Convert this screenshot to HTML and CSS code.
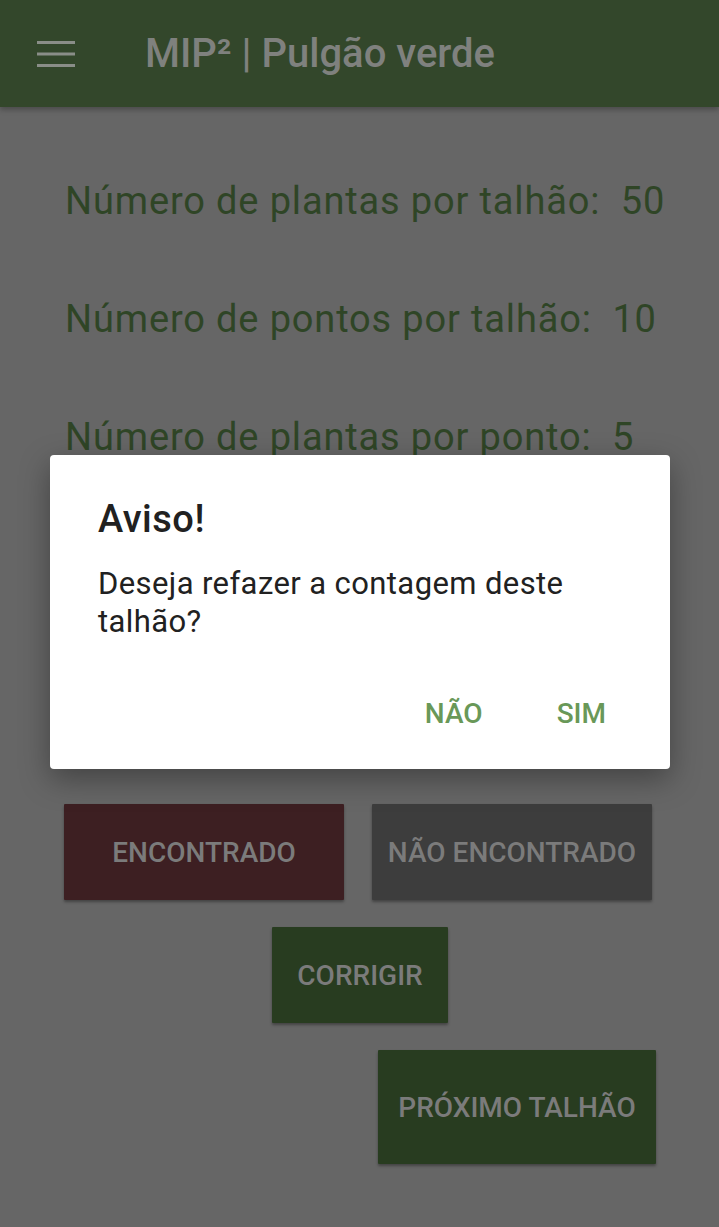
FILE: index.html
```html
<!DOCTYPE html>
<html lang="pt">
<head>
<meta charset="utf-8">
<title>MIP² | Pulgão verde</title>
<link rel="stylesheet" href="styles.css">
</head>
<body>
<header class="appbar">
  <svg class="menu-icon" width="38" height="28" viewBox="0 0 38 28" aria-hidden="true">
    <rect x="0" y="1" width="38" height="3"/>
    <rect x="0" y="12.5" width="38" height="3"/>
    <rect x="0" y="24" width="38" height="3"/>
  </svg>
  <h1 class="appbar-title">MIP² | Pulgão verde</h1>
</header>

<main class="content">
  <p class="info-row">Número de plantas por talhão:&nbsp; 50</p>
  <p class="info-row">Número de pontos por talhão:&nbsp; 10</p>
  <p class="info-row">Número de plantas por ponto:&nbsp; 5</p>

  <div class="actions">
    <div class="btn-row">
      <button class="btn btn-found">ENCONTRADO</button>
      <button class="btn btn-notfound">NÃO ENCONTRADO</button>
    </div>
    <div class="btn-row center">
      <button class="btn btn-green btn-fix">CORRIGIR</button>
    </div>
    <div class="btn-row end">
      <button class="btn btn-green btn-next">PRÓXIMO TALHÃO</button>
    </div>
  </div>
</main>

<div class="dialog" role="dialog">
  <h2 class="dialog-title">Aviso!</h2>
  <p class="dialog-text">Deseja refazer a contagem deste talhão?</p>
  <div class="dialog-actions">
    <button class="dialog-btn">NÃO</button>
    <button class="dialog-btn">SIM</button>
  </div>
</div>
</body>
</html>
```

FILE: styles.css
```css
* { box-sizing: border-box; }

html, body {
  margin: 0;
  padding: 0;
}

body {
  width: 719px;
  height: 1227px;
  background: #666666;
  font-family: Roboto, "Noto Sans", sans-serif;
  overflow: hidden;
  position: relative;
}

.appbar {
  height: 107px;
  background: #33472b;
  display: flex;
  align-items: center;
  padding-left: 37px;
  box-shadow: 0 3px 5px rgba(0, 0, 0, 0.25);
  position: relative;
}

.menu-icon {
  fill: #8a8e88;
  flex: none;
}

.appbar-title {
  margin: 0 0 0 70px;
  font-size: 40px;
  font-weight: 500;
  color: #7f817e;
}

.content {
  padding: 72px 0 0 65px;
}

.info-row {
  margin: 0 0 74px 0;
  font-size: 38px;
  line-height: 44px;
  color: #2f4526;
  letter-spacing: 0.85px;
}

.actions {
  margin-top: 345px;
  margin-left: -1px;
  padding-right: 63px;
}

.btn-row {
  display: flex;
  gap: 28px;
  margin-bottom: 27px;
}

.btn-row.center {
  justify-content: center;
}

.btn-row.end {
  justify-content: flex-end;
}

.btn {
  border: none;
  border-radius: 1px;
  font-family: Roboto, "Noto Sans", sans-serif;
  font-size: 28px;
  font-weight: 500;
  color: #7b7b7b;
  box-shadow: 0 2px 3px rgba(0, 0, 0, 0.35);
  padding: 0;
}

.btn-found,
.btn-notfound {
  width: 280px;
  height: 96px;
}

.btn-found { background: #3d1f22; }
.btn-notfound { background: #3d3d3d; }

.btn-green { background: #283c20; }

.btn-fix {
  width: 176px;
  height: 96px;
}

.btn-next {
  width: 278px;
  height: 114px;
}

.dialog {
  position: absolute;
  left: 50px;
  top: 455px;
  width: 620px;
  height: 314px;
  background: #ffffff;
  border-radius: 4px;
  box-shadow: 0 10px 30px rgba(0, 0, 0, 0.35);
  padding: 42px 40px 0 48px;
}

.dialog-title {
  margin: 0;
  font-size: 38px;
  line-height: 44px;
  font-weight: 500;
  color: #212121;
  letter-spacing: 0.5px;
}

.dialog-text {
  margin: 24px 0 0 0;
  font-size: 31px;
  line-height: 38px;
  color: #212121;
  letter-spacing: 0.4px;
}

.dialog-actions {
  display: flex;
  justify-content: flex-end;
  gap: 74px;
  margin-top: 56px;
  padding-right: 24px;
}

.dialog-btn {
  border: none;
  background: none;
  padding: 0;
  font-family: Roboto, "Noto Sans", sans-serif;
  font-size: 28px;
  font-weight: 500;
  color: #699858;
}
```
